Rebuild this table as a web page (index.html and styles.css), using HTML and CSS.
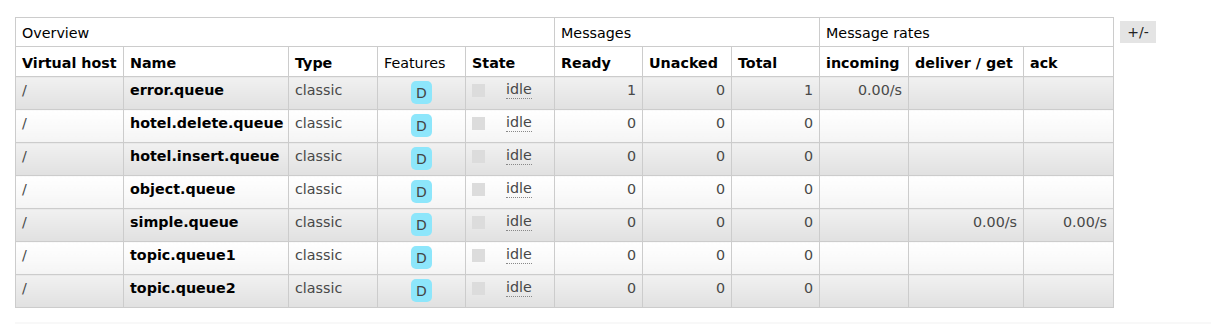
FILE: index.html
```html
<!DOCTYPE html>
<html>
<head>
<meta charset="utf-8">
<link rel="stylesheet" href="styles.css">
</head>
<body>
<div class="page">
  <div class="wrap">
    <table class="list">
      <colgroup>
        <col class="w108"><col class="w165"><col class="w89"><col class="w88"><col class="w89"><col class="w88"><col class="w89"><col class="w88"><col class="w89"><col class="w115"><col class="w90">
      </colgroup>
      <thead>
        <tr class="group">
          <th colspan="5">Overview</th>
          <th colspan="3">Messages</th>
          <th colspan="3">Message rates</th>
        </tr>
        <tr class="cols">
          <th>Virtual host</th><th>Name</th><th>Type</th><th class="plain">Features</th><th>State</th>
          <th>Ready</th><th>Unacked</th><th>Total</th>
          <th>incoming</th><th>deliver / get</th><th>ack</th>
        </tr>
      </thead>
      <tbody>
        <tr class="alt1">
          <td>/</td><td class="name">error.queue</td><td>classic</td><td class="c"><span class="badge">D</span></td>
          <td><div class="state"><span class="sq"></span><abbr>idle</abbr></div></td>
          <td class="r">1</td><td class="r">0</td><td class="r">1</td><td class="r">0.00/s</td><td></td><td></td>
        </tr>
        <tr class="alt2">
          <td>/</td><td class="name">hotel.delete.queue</td><td>classic</td><td class="c"><span class="badge">D</span></td>
          <td><div class="state"><span class="sq"></span><abbr>idle</abbr></div></td>
          <td class="r">0</td><td class="r">0</td><td class="r">0</td><td></td><td></td><td></td>
        </tr>
        <tr class="alt1">
          <td>/</td><td class="name">hotel.insert.queue</td><td>classic</td><td class="c"><span class="badge">D</span></td>
          <td><div class="state"><span class="sq"></span><abbr>idle</abbr></div></td>
          <td class="r">0</td><td class="r">0</td><td class="r">0</td><td></td><td></td><td></td>
        </tr>
        <tr class="alt2">
          <td>/</td><td class="name">object.queue</td><td>classic</td><td class="c"><span class="badge">D</span></td>
          <td><div class="state"><span class="sq"></span><abbr>idle</abbr></div></td>
          <td class="r">0</td><td class="r">0</td><td class="r">0</td><td></td><td></td><td></td>
        </tr>
        <tr class="alt1">
          <td>/</td><td class="name">simple.queue</td><td>classic</td><td class="c"><span class="badge">D</span></td>
          <td><div class="state"><span class="sq"></span><abbr>idle</abbr></div></td>
          <td class="r">0</td><td class="r">0</td><td class="r">0</td><td></td><td class="r">0.00/s</td><td class="r">0.00/s</td>
        </tr>
        <tr class="alt2">
          <td>/</td><td class="name">topic.queue1</td><td>classic</td><td class="c"><span class="badge">D</span></td>
          <td><div class="state"><span class="sq"></span><abbr>idle</abbr></div></td>
          <td class="r">0</td><td class="r">0</td><td class="r">0</td><td></td><td></td><td></td>
        </tr>
        <tr class="alt1">
          <td>/</td><td class="name">topic.queue2</td><td>classic</td><td class="c"><span class="badge">D</span></td>
          <td><div class="state"><span class="sq"></span><abbr>idle</abbr></div></td>
          <td class="r">0</td><td class="r">0</td><td class="r">0</td><td></td><td></td><td></td>
        </tr>
      </tbody>
    </table>
    <span class="toggle">+/-</span>
  </div>
  <div class="strip"></div>
</div>
</body>
</html>
```

FILE: styles.css
```css
html, body {
  margin: 0;
  padding: 0;
  background: #fff;
}
body {
  font-family: "DejaVu Sans", Verdana, sans-serif;
  font-size: 14.3px;
  color: #484848;
}
.page {
  padding: 17px 0 0 15px;
}
.wrap {
  display: flex;
  align-items: flex-start;
}
.list {
  border-collapse: collapse;
  table-layout: fixed;
  width: 1098px;
}
.w108 { width: 108px; }
.w165 { width: 165px; }
.w89 { width: 89px; }
.w88 { width: 88px; }
.w115 { width: 115px; }
.w90 { width: 90px; }
.list th, .list td {
  border: 1px solid #cccccc;
  padding: 4px 6px 0 6px;
  text-align: left;
  vertical-align: top;
  line-height: 18px;
  white-space: nowrap;
  overflow: hidden;
}
.list th {
  color: #000;
  background: #fff;
}
.group th {
  font-weight: normal;
  height: 22px;
  padding-top: 6px;
}
.cols th {
  font-weight: bold;
  height: 22px;
  padding-top: 7px;
}
.cols th.plain {
  font-weight: normal;
}
.list td {
  height: 28px;
  padding-top: 4px;
}
.alt1 td {
  background: linear-gradient(#f1f1f1, #e1e1e1);
}
.alt2 td {
  background: linear-gradient(#ffffff, #f9f9f9 60%, #f4f4f4);
}
.list td.name {
  font-weight: bold;
  color: #000;
}
.list td.r {
  text-align: right;
}
.list td.c {
  text-align: center;
  padding-top: 4px;
}
.badge {
  display: inline-block;
  width: 21px;
  height: 23px;
  line-height: 25px;
  border-radius: 5px;
  background: #8de6fb;
  color: #444;
  text-align: center;
  font-size: 14px;
}
.state {
  display: flex;
  align-items: flex-start;
}
.sq {
  width: 13px;
  height: 13px;
  background: #dcdcdc;
  margin: 3px 0 0 0;
  flex: none;
}
.state abbr {
  margin-left: 21px;
  text-decoration: none;
  border-bottom: 1px dotted #888;
  line-height: 17px;
}
.toggle {
  margin-left: 6px;
  margin-top: 4px;
  width: 36px;
  height: 22px;
  line-height: 22px;
  background: #e4e4e4;
  color: #222;
  text-align: center;
  font-size: 14px;
}
.strip {
  margin-top: 14px;
  height: 10px;
  background: #f8f8f8;
}
```
